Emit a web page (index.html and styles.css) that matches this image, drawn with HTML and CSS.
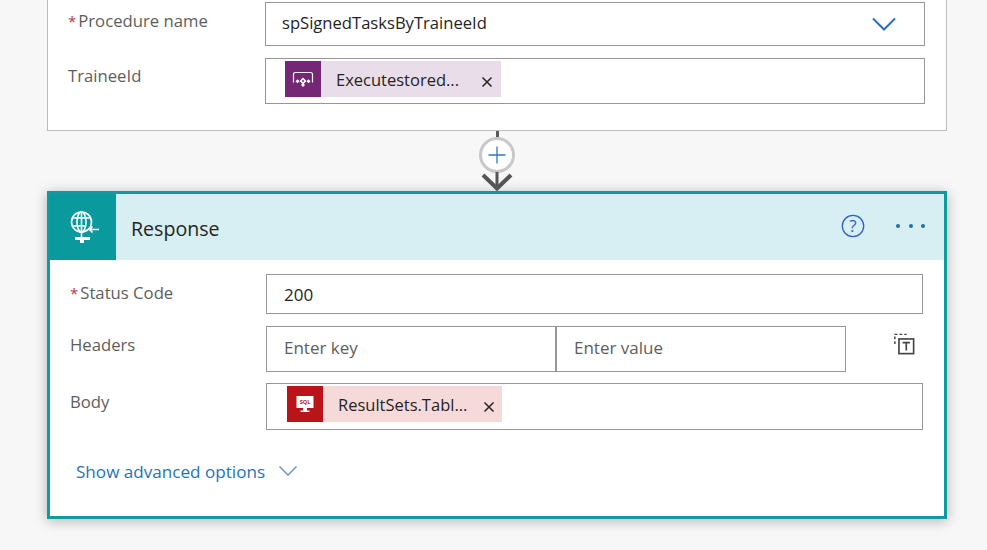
FILE: index.html
```html
<!DOCTYPE html>
<html lang="en">
<head>
<meta charset="utf-8">
<title>Flow</title>
<link rel="stylesheet" href="styles.css">
</head>
<body>
<main class="page">
  <section class="card-top">
    <div class="row row-proc">
      <div class="label"><span class="req">*</span>Procedure name</div>
      <div class="field field-select">
        <span class="value">spSignedTasksByTraineeId</span>
        <svg class="chev" width="26" height="16" viewBox="0 0 26 16"><path d="M2 2.500 13 13.500 24 2.500" fill="none" stroke="#2b6cc4" stroke-width="2"/></svg>
      </div>
    </div>
    <div class="row row-trainee">
      <div class="label">TraineeId</div>
      <div class="field field-token">
        <div class="token token-purple">
          <span class="token-icon icon-purple">
            <svg width="24" height="24" viewBox="0 0 24 24"><path d="M2.500 15.500V7.500Q2.500 5.500 4.500 5.500H19.500Q21.500 5.500 21.500 7.500V15.500" fill="none" stroke="#fff" stroke-width="1.200"/><path d="M6.500 12.200 8.500 14.200 6.500 16.200 4.500 14.200ZM17.500 12.200 19.500 14.200 17.500 16.200 15.500 14.200Z" fill="#fff"/><path d="M12 10.500 15.500 14 12 17.500 8.500 14ZM12 12.800 10.800 14 12 15.200 13.200 14Z" fill="#fff" fill-rule="evenodd"/><path d="M12 16 14 18 12 20 10 18Z" fill="#fff"/></svg>
          </span>
          <span class="token-text">Executestored...</span>
          <svg class="token-x" width="12" height="12" viewBox="0 0 12 12"><path d="M1.500 1.500 10.500 10.500M10.500 1.500 1.500 10.500" stroke="#252423" stroke-width="1.500"/></svg>
        </div>
      </div>
    </div>
  </section>

  <div class="connector">
    <span class="line"></span>
    <span class="plus">
      <svg width="20" height="20" viewBox="0 0 20 20"><path d="M10 1.500V18.500M1.500 10H18.500" stroke="#2b78c2" stroke-width="1.300"/></svg>
    </span>
    <svg class="arrow" width="32" height="19" viewBox="0 0 32 19"><path d="M2 3 16 16.500 30 3" fill="none" stroke="#555" stroke-width="4"/><path d="M16 0V17" stroke="#555" stroke-width="3"/></svg>
  </div>

  <section class="card-resp">
    <header class="resp-head">
      <div class="resp-icon">
        <svg width="36" height="38" viewBox="0 0 36 38">
          <g fill="none" stroke="#fff" stroke-width="1.600">
            <circle cx="16.500" cy="14" r="10"/>
            <ellipse cx="16.500" cy="14" rx="4.500" ry="10"/>
            <path d="M16.500 4V24M7.500 10H25.500M7.500 18H21"/>
            <path d="M34 21.500H24.500M27.500 18.500 24.500 21.500 27.500 24.500"/>
            <path d="M16.500 24V29"/>
          </g>
          <rect x="10" y="29" width="15" height="3" fill="#fff"/>
          <rect x="15" y="32" width="4" height="3" fill="#fff"/>
        </svg>
      </div>
      <h2 class="resp-title">Response</h2>
      <div class="resp-actions">
        <svg width="24" height="24" viewBox="0 0 24 24"><circle cx="12" cy="12" r="10.700" fill="none" stroke="#2b62c8" stroke-width="1.300"/><text class="help-q" x="12" y="18" text-anchor="middle">?</text></svg>
        <span class="dots"><i></i><i></i><i></i></span>
      </div>
    </header>
    <div class="resp-body">
      <div class="row row-status">
        <div class="label"><span class="req">*</span>Status Code</div>
        <div class="field field-plain"><span class="value">200</span></div>
      </div>
      <div class="row row-headers">
        <div class="label">Headers</div>
        <div class="pair">
          <div class="field field-half"><span class="placeholder">Enter key</span></div>
          <div class="field field-half field-joined"><span class="placeholder">Enter value</span></div>
          <svg class="text-mode" width="22" height="22" viewBox="0 0 24 24">
            <path d="M2 12V1.500H15" fill="none" stroke="#444" stroke-width="1.600" stroke-dasharray="3 2.200"/>
            <rect x="6.500" y="6.500" width="16" height="16" fill="#fff" stroke="#444" stroke-width="1.800"/>
            <path d="M10.500 10.500H18.500M14.500 10.500V19" fill="none" stroke="#444" stroke-width="1.800"/>
          </svg>
        </div>
      </div>
      <div class="row row-body">
        <div class="label">Body</div>
        <div class="field field-token field-token-red">
          <div class="token token-red">
            <span class="token-icon icon-red">
              <svg width="24" height="24" viewBox="0 0 24 24"><rect x="3.500" y="4" width="17" height="12" fill="#fff"/><text class="sql" x="12" y="12" text-anchor="middle">SQL</text><path d="M10 16H14V18.500H10ZM7.500 18.500H16.500V20H7.500Z" fill="#fff"/></svg>
            </span>
            <span class="token-text">ResultSets.Tabl...</span>
            <svg class="token-x token-x-red" width="12" height="12" viewBox="0 0 12 12"><path d="M1.500 1.500 10.500 10.500M10.500 1.500 1.500 10.500" stroke="#252423" stroke-width="1.500"/></svg>
          </div>
        </div>
      </div>
      <div class="advanced">
        <span class="adv-link">Show advanced options</span>
        <svg width="20" height="12" viewBox="0 0 20 12"><path d="M1.500 1.500 10 10 18.500 1.500" fill="none" stroke="#5f8fc0" stroke-width="1.300"/></svg>
      </div>
    </div>
  </section>
</main>
</body>
</html>
```
FILE: styles.css
```css
* { box-sizing: border-box; }
html, body { margin: 0; height: 100%; }
body {
  background: #f7f7f7;
  font-family: "Open Sans", "Noto Sans", sans-serif;
  color: #252423;
  overflow: hidden;
}
.page { width: 987px; height: 550px; padding-left: 47px; }

.card-top {
  width: 900px;
  height: 131px;
  background: #fff;
  border: 1px solid #bdbdbd;
  border-top: 0;
  padding: 2px 21px 0 20px;
}
.row { display: flex; }
.label {
  width: 197px;
  flex: none;
  font-size: 16.700px;
  color: #605e5c;
  line-height: 22px;
}
.req { color: #c4314b; margin-right: 2px; font-size: 15px; }
.field {
  border: 1px solid #979797;
  background: #fff;
  display: flex;
  align-items: center;
  font-size: 17px;
}
.value { color: #252423; }
.placeholder { color: #605e5c; padding-bottom: 3px; }

.row-proc { height: 44px; }
.row-proc .label { padding-top: 8px; }
.row-proc .value { font-size: 16.600px; padding-bottom: 3px; }
.row-trainee { height: 46px; margin-top: 12px; }
.row-trainee .label { padding-top: 7px; }
.field-select {
  width: 660px;
  padding: 0 27px 0 16px;
  justify-content: space-between;
}
.field-token { width: 660px; padding: 2px 19px 0; align-items: flex-start; }
.field-token-red { width: 657px; padding-left: 20px; }

.token {
  height: 36px;
  display: flex;
  align-items: center;
  font-size: 16.500px;
}
.token-purple { background: #e8dde9; }
.token-red { background: #f6dada; }
.token-icon {
  width: 36px;
  height: 36px;
  display: flex;
  align-items: center;
  justify-content: center;
}
.icon-purple { background: #742774; }
.icon-red { background: #ba141a; }
.token-text { margin-left: 15px; width: 126px; white-space: nowrap; color: #252423; }
.token-x { margin: 6px 8px 0 19px; flex: none; }
.token-x-red { margin-right: 7px; }
.sql { font: 700 5.500px "Open Sans", sans-serif; fill: #ba141a; }

.connector {
  height: 60px;
  display: flex;
  flex-direction: column;
  align-items: center;
  width: 900px;
}
.line { width: 3px; height: 6px; background: #5a5a5a; flex: none; }
.plus {
  width: 36px;
  height: 36px;
  flex: none;
  border: 3px solid #c8c8c8;
  border-radius: 50%;
  background: #fff;
  display: flex;
  align-items: center;
  justify-content: center;
}
.arrow { flex: none; margin-top: -1px; }

.card-resp {
  width: 900px;
  height: 328px;
  background: #fff;
  border: 3px solid #0f9a9e;
  box-shadow: 0 2px 12px rgba(0, 0, 0, .28);
}
.resp-head {
  height: 66px;
  background: #d7eff2;
  display: flex;
  align-items: center;
}
.resp-icon {
  width: 66px;
  height: 66px;
  background: #0a9a9e;
  display: flex;
  align-items: center;
  justify-content: center;
}
.resp-title {
  margin: 2px 0 0 15px;
  flex: 1;
  font-size: 19.600px;
  font-weight: 400;
  color: #252423;
}
.resp-actions {
  display: flex;
  align-items: center;
  gap: 31px;
  padding: 0 19px 2px 0;
}
.help-q { font: 400 17px "Open Sans", sans-serif; fill: #2b62c8; }
.dots { display: flex; gap: 8.500px; }
.dots i { width: 4px; height: 4px; border-radius: 50%; background: #1d6fb0; }

.resp-body { padding: 14px 21px 0 20px; }
.resp-body .label { width: 196px; }
.row-status { height: 40px; }
.row-status .label { padding-top: 8px; }
.field-plain { width: 657px; padding-left: 17px; }
.row-headers { height: 46px; margin-top: 12px; }
.row-headers .label { padding-top: 8px; }
.pair { display: flex; }
.field-half { width: 290px; padding-left: 17px; }
.field-joined { border-left: 1px solid #979797; margin-left: 0; padding-left: 17px; width: 290px; }
.text-mode { margin: 7px 0 0 47px; flex: none; }
.row-body { height: 47px; margin-top: 11px; }
.row-body .label { padding-top: 8px; }
.advanced {
  display: flex;
  align-items: center;
  gap: 13px;
  margin: 28px 0 0 6px;
  height: 26px;
}
.adv-link { font-size: 17.100px; color: #2b72b5; }
```
